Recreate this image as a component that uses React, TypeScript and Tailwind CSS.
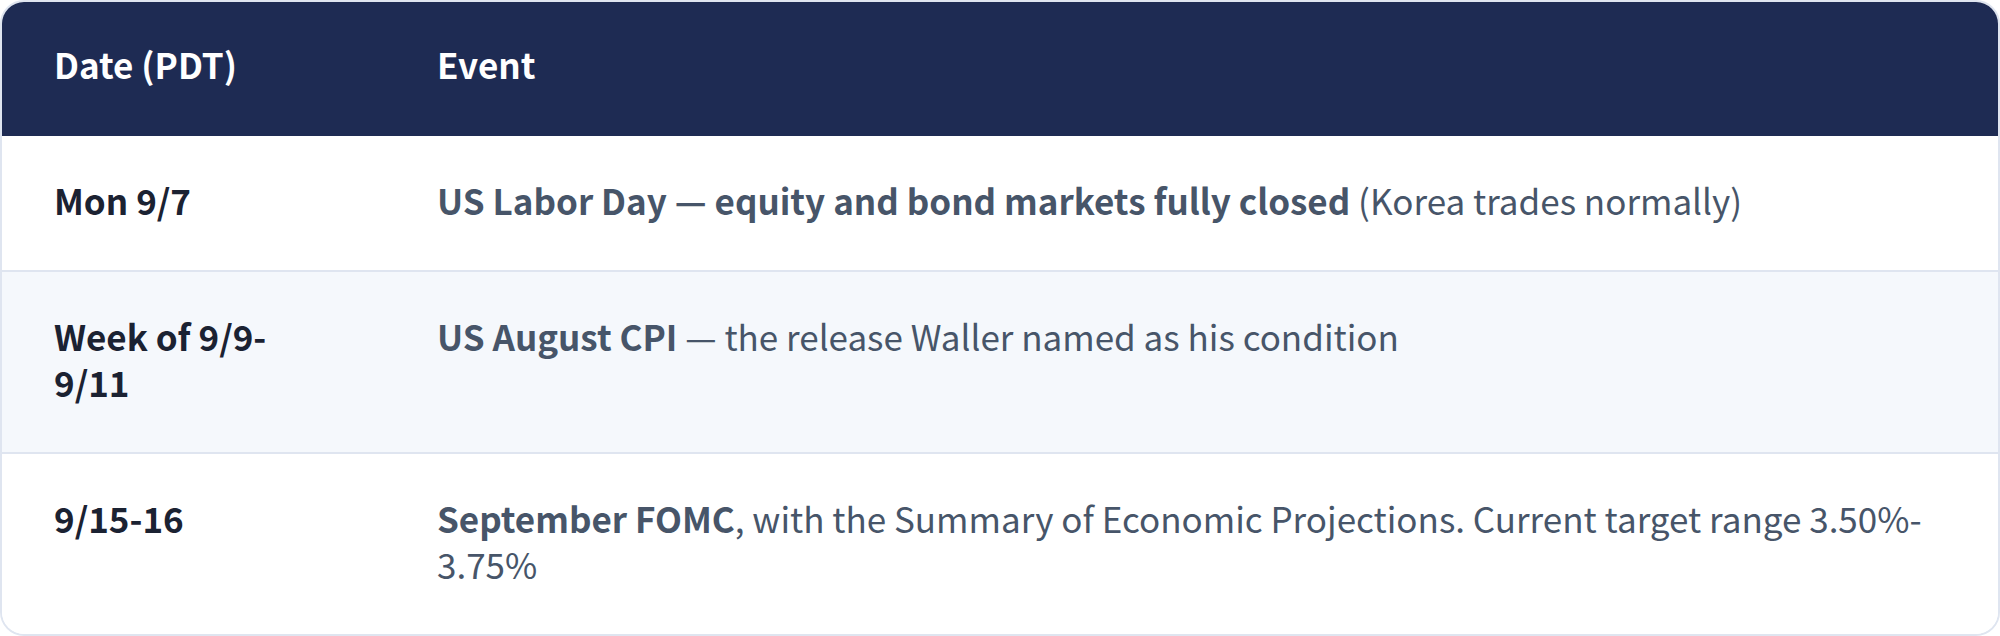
const rows = [
  {
    date: 'Mon 9/7',
    event: (
      <>
        <span className="font-semibold">US Labor Day — equity and bond markets fully closed</span> (Korea trades normally)
      </>
    ),
  },
  {
    date: (
      <>
        Week of 9/9-
        <wbr />
        9/11
      </>
    ),
    event: (
      <>
        <span className="font-semibold">US August CPI</span> — the release Waller named as his condition
      </>
    ),
  },
  {
    date: '9/15-16',
    event: (
      <>
        <span className="font-semibold">September FOMC</span>, with the Summary of Economic Projections. Current target range
        3.50%-
        <wbr />
        3.75%
      </>
    ),
  },
];

export default function App() {
  return (
    <div
      className="w-[2000px] h-[636px] bg-white"
      style={{ fontFamily: '"Noto Sans CJK KR", "Noto Sans", sans-serif' }}
    >
      <div className="h-full border-2 border-[#dfe5f0] rounded-[24px] overflow-hidden text-[35px] leading-[46px]">
        <div className="grid grid-cols-[383px_1fr] bg-[#1e2b53] text-white font-bold">
          <div className="px-[52px] pt-[39px] pb-[49px]">Date (PDT)</div>
          <div className="px-[52px] pt-[39px] pb-[49px]">Event</div>
        </div>
        {rows.map((row, index) => (
          <div
            key={index}
            className={`grid grid-cols-[383px_1fr] ${index % 2 === 1 ? 'bg-[#f5f8fc]' : 'bg-white'} ${
              index < rows.length - 1 ? 'border-b-2 border-[#dfe5f0]' : ''
            }`}
          >
            <div className="px-[52px] pt-[41px] pb-[47px] font-bold text-[#1b2232]">
              <div className="max-w-[240px]">{row.date}</div>
            </div>
            <div className="pl-[52px] pr-[40px] pt-[41px] pb-[47px] text-[#475569]">{row.event}</div>
          </div>
        ))}
      </div>
    </div>
  );
}
